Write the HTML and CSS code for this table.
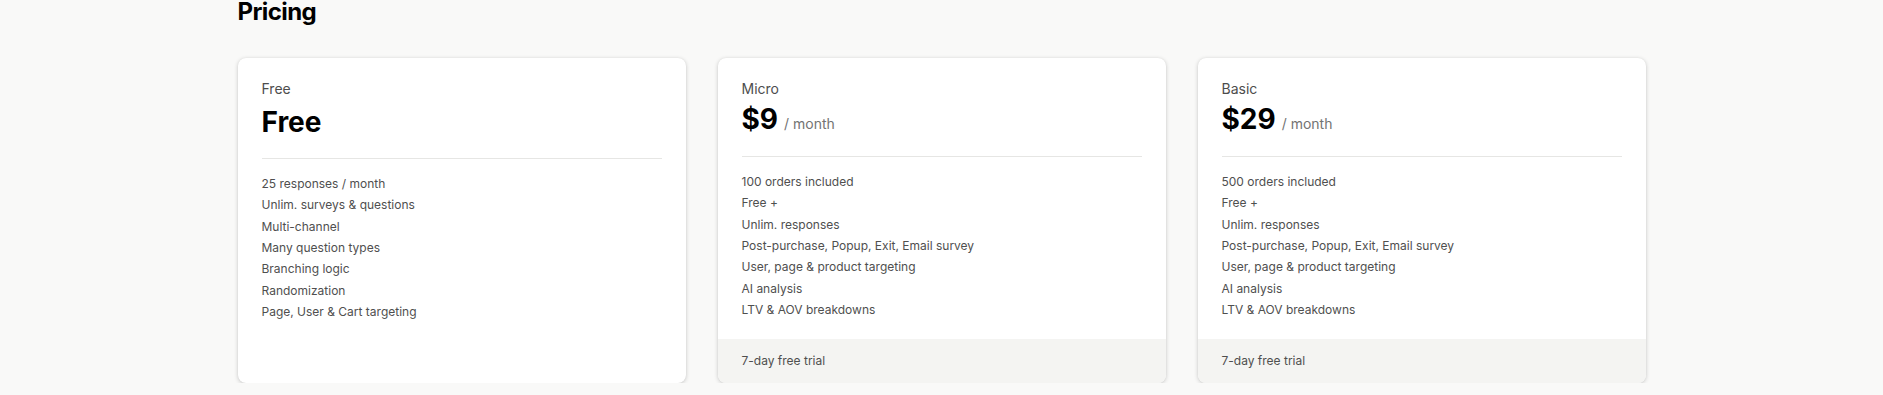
FILE: index.html
```html
<!DOCTYPE html>
<html lang="en">
<head>
<meta charset="utf-8">
<title>Pricing</title>
<link rel="stylesheet" href="styles.css">
</head>
<body>
<main class="page">
  <h2 class="section-title">Pricing</h2>
  <div class="plans">
    <section class="plan">
      <div class="plan-body">
        <div class="plan-name">Free</div>
        <div class="plan-price plan-price--free"><span class="amount">Free</span></div>
        <hr class="divider">
        <ul class="features">
          <li>25 responses / month</li>
          <li>Unlim. surveys &amp; questions</li>
          <li>Multi-channel</li>
          <li>Many question types</li>
          <li>Branching logic</li>
          <li>Randomization</li>
          <li>Page, User &amp; Cart targeting</li>
        </ul>
      </div>
    </section>
    <section class="plan">
      <div class="plan-body">
        <div class="plan-name">Micro</div>
        <div class="plan-price"><span class="amount">$9</span><span class="period">/ month</span></div>
        <hr class="divider">
        <ul class="features">
          <li>100 orders included</li>
          <li>Free +</li>
          <li>Unlim. responses</li>
          <li>Post-purchase, Popup, Exit, Email survey</li>
          <li>User, page &amp; product targeting</li>
          <li>AI analysis</li>
          <li>LTV &amp; AOV breakdowns</li>
        </ul>
      </div>
      <div class="plan-footer">7-day free trial</div>
    </section>
    <section class="plan">
      <div class="plan-body">
        <div class="plan-name">Basic</div>
        <div class="plan-price"><span class="amount">$29</span><span class="period">/ month</span></div>
        <hr class="divider">
        <ul class="features">
          <li>500 orders included</li>
          <li>Free +</li>
          <li>Unlim. responses</li>
          <li>Post-purchase, Popup, Exit, Email survey</li>
          <li>User, page &amp; product targeting</li>
          <li>AI analysis</li>
          <li>LTV &amp; AOV breakdowns</li>
        </ul>
      </div>
      <div class="plan-footer">7-day free trial</div>
    </section>
  </div>
</main>
</body>
</html>
```

FILE: styles.css
```css
* { box-sizing: border-box; }

html, body {
  margin: 0;
  padding: 0;
  background: #f9f9f8;
  font-family: Inter, "Noto Sans", "Liberation Sans", sans-serif;
  color: #111;
}

.page {
  width: 1408px;
  margin: 0 auto;
}

.section-title {
  margin: 0;
  font-size: 24px;
  line-height: 24px;
  font-weight: 700;
  color: #000;
  letter-spacing: -0.6px;
}

.plans {
  margin-top: 34px;
  display: grid;
  grid-template-columns: repeat(3, 1fr);
  gap: 32px;
  align-items: stretch;
}

.plan {
  background: #fff;
  border-radius: 8px;
  box-shadow: 0 1px 4px rgba(0, 0, 0, 0.2), 0 0 1px rgba(0, 0, 0, 0.08);
  display: flex;
  flex-direction: column;
  overflow: hidden;
}

.plan-body {
  flex: 1;
  padding: 24px 24px 19px;
}

.plan-name {
  font-size: 14px;
  line-height: 14px;
  color: #4d4d4d;
}

.plan-price {
  margin-top: 5px;
  font-size: 28px;
  line-height: 36px;
  height: 36px;
}

.plan-price--free {
  margin-top: 8px;
  height: 35px;
}

.amount {
  font-size: 28px;
  font-weight: 700;
  color: #000;
}

.period {
  margin-left: 6px;
  font-size: 14px;
  color: #737373;
}

.divider {
  margin: 19px 0 0;
  border: 0;
  border-top: 1px solid #e6e6e4;
  height: 0;
}

.features {
  list-style: none;
  margin: 14px 0 0;
  padding: 0;
  font-size: 12px;
  line-height: 21.33px;
  color: #4f4f4f;
}

.plan-footer {
  background: #f4f4f2;
  padding: 12px 24px;
  font-size: 12px;
  line-height: 20px;
  color: #4f4f4f;
}
```
